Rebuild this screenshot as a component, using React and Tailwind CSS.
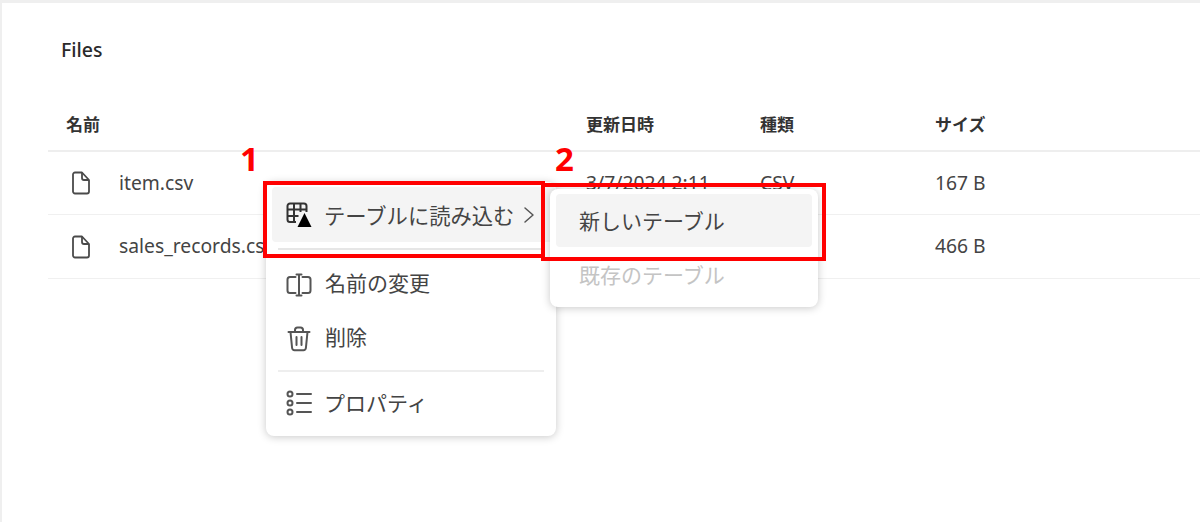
const fontStack = "font-['Noto_Sans','Noto_Sans_CJK_JP',sans-serif]";

const FileIcon = () => (
  <svg width="20" height="24" viewBox="0 0 20 24" fill="none" stroke="#4a4a4a" strokeWidth="1.8" strokeLinejoin="round">
    <path d="M4 1.5h7l7 7.5v11.500a2 2 0 0 1-2 2H4a2 2 0 0 1-2-2v-17a2 2 0 0 1 2-2z" />
    <path d="M11 1.500v5.500a2 2 0 0 0 2 2h5" />
  </svg>
);

const TableIcon = () => (
  <svg width="26" height="26" viewBox="0 0 26 26" fill="none" stroke="#333" strokeWidth="2">
    <path d="M10 20H4a2.500 2.500 0 0 1-2.500-2.500V4A2.500 2.500 0 0 1 4 1.500h14A2.500 2.500 0 0 1 20.500 4v6" />
    <path d="M1.500 7.500h19M1.500 14h11M8 1.500V20M14.500 1.500V10" />
    <path d="M18.500 11l7 14h-14z" fill="#000" stroke="none" />
  </svg>
);

const RenameIcon = () => (
  <svg width="26" height="24" viewBox="0 0 26 24" fill="none" stroke="#555" strokeWidth="2" strokeLinecap="round">
    <path d="M9.500 4H4a2.500 2.500 0 0 0-2.500 2.500v11A2.500 2.500 0 0 0 4 20h5.500M16.500 4H22a2.500 2.500 0 0 1 2.500 2.500v11A2.500 2.500 0 0 1 22 20h-5.500" />
    <path d="M13 2v20M10.500 1.500h5M10.500 22.500h5" />
  </svg>
);

const TrashIcon = () => (
  <svg width="24" height="26" viewBox="0 0 24 26" fill="none" stroke="#555" strokeWidth="2" strokeLinecap="round">
    <path d="M1.500 6h21M8 6V4a2.500 2.500 0 0 1 2.500-2.500h3A2.500 2.500 0 0 1 16 4v2" />
    <path d="M3.500 6l1.600 16a2.500 2.500 0 0 0 2.500 2.200h8.800a2.500 2.500 0 0 0 2.500-2.200L20.500 6" />
    <path d="M9.500 11v8M14.500 11v8" />
  </svg>
);

const ListIcon = () => (
  <svg width="26" height="26" viewBox="0 0 26 26" fill="none" stroke="#555" strokeWidth="2" strokeLinecap="round">
    <circle cx="4" cy="4" r="2.500" />
    <circle cx="4" cy="13" r="2.500" />
    <circle cx="4" cy="22" r="2.500" />
    <path d="M11 4h14M11 13h14M11 22h14" />
  </svg>
);

const rows = [
  { name: "item.csv", date: "3/7/2024 2:11", type: "CSV", size: "167 B", height: "h-[63px]" },
  { name: "sales_records.csv", date: "3/7/2024 2:11", type: "CSV", size: "466 B", height: "h-[64px]" },
];

const MenuItem = ({ icon, label, labelClass }) => (
  <div className="flex items-center h-[54px] pl-[13px] text-[21px] text-[#444]">
    <span className="w-[27px] flex justify-center">{icon}</span>
    <span className={labelClass}>{label}</span>
  </div>
);

export default function App() {
  return (
    <div className={`relative h-[522px] w-[1200px] overflow-hidden bg-white border-t-[3px] border-l-[2px] border-[#efefef] ${fontStack}`}>
      <h1 className="pl-[59px] pt-[35px] text-[19.5px] leading-[24px] font-medium text-[#2a2a2a]">Files</h1>

      <div className="ml-[46px] mt-[37px]">
        <div className="flex items-center h-[53px] border-b-2 border-[#eeeeee] text-[17px] font-bold text-[#333]">
          <span className="pl-[18px] w-[538px]">名前</span>
          <span className="w-[174px]">更新日時</span>
          <span className="w-[175px]">種類</span>
          <span>サイズ</span>
        </div>
        {rows.map((row) => (
          <div key={row.name} className={`flex items-center ${row.height} border-b border-[#f0f0f0] text-[19.3px] text-[#444]`}>
            <span className="pl-[23px] w-[71px]"><FileIcon /></span>
            <span className="w-[467px] whitespace-nowrap">{row.name}</span>
            <span className="w-[174px]">{row.date}</span>
            <span className="w-[175px]">{row.type}</span>
            <span>{row.size}</span>
          </div>
        ))}
      </div>

      {/* context menu */}
      <div className="absolute left-[264px] top-[179px] w-[290px] h-[254px] bg-white rounded-[8px] shadow-[0_1px_8px_rgba(0,0,0,0.22)] px-[6px] pt-[5px]">
        <div className="flex items-center h-[55px] rounded-[4px] bg-[#f4f4f4] pl-[13px] text-[21.3px] text-[#444] mr-[-6px]">
          <span className="w-[27px] flex justify-center pt-[1px]"><TableIcon /></span>
          <span className="ml-[12px] whitespace-nowrap pt-[3px]">テーブルに読み込む</span>
          <svg className="ml-[9px]" width="12" height="18" viewBox="0 0 12 18" fill="none" stroke="#555" strokeWidth="1.5" strokeLinecap="round" strokeLinejoin="round">
            <path d="M2 2l8 7-8 7" />
          </svg>
        </div>
        <div className="mx-[6px] mt-[6px] mb-[8px] border-t-2 border-[#e6e6e6]" />
        <MenuItem icon={<RenameIcon />} label="名前の変更" labelClass="ml-[13px] -mt-[2px]" />
        <MenuItem icon={<TrashIcon />} label="削除" labelClass="ml-[13px] -mt-[2px]" />
        <div className="mx-[6px] my-[4px] border-t-2 border-[#eeeeee]" />
        <MenuItem icon={<ListIcon />} label="プロパティ" labelClass="ml-[12px] mt-[2px]" />
      </div>

      {/* submenu */}
      <div className="absolute left-[548px] top-[186px] w-[268px] h-[118px] bg-white rounded-[8px] shadow-[0_1px_8px_rgba(0,0,0,0.22)] px-[6px] pt-[5px] text-[21px]">
        <div className="flex items-center h-[53px] rounded-[4px] bg-[#f4f4f4] pl-[23px] pt-[2px] text-[#444]">新しいテーブル</div>
        <div className="flex items-center h-[58px] pl-[23px] text-[#c4c4c4]">既存のテーブル</div>
      </div>

      {/* annotations */}
      <span className="absolute left-[238px] top-[134px] text-[33px] leading-[44px] font-bold text-[#ff0000]">1</span>
      <span className="absolute left-[553px] top-[134px] text-[33px] leading-[44px] font-bold text-[#ff0000]">2</span>
      <div className="absolute left-[261px] top-[178px] w-[282px] h-[77px] border-4 border-[#ff0000]" />
      <div className="absolute left-[539px] top-[180px] w-[285px] h-[78px] border-4 border-[#ff0000]" />
    </div>
  );
}
